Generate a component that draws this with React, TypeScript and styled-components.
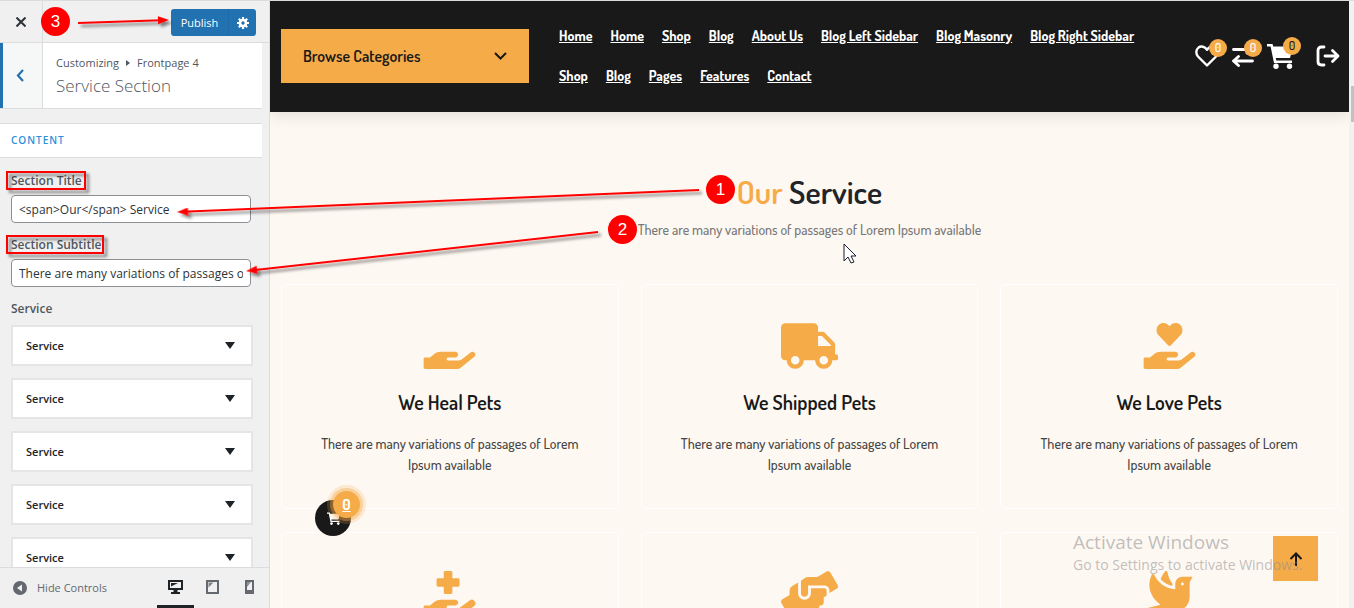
import React from "react";
import styled, { createGlobalStyle } from "styled-components";
import { FaHandHolding, FaTruck, FaHandHoldingHeart, FaHandHoldingMedical, FaHandsHelping, FaDove } from "react-icons/fa";

const UI = `"Segoe UI", "Open Sans", "Noto Sans", sans-serif`;
const SITE = `Dosis, "Liberation Sans Narrow", Lato, sans-serif`;
const ORANGE = "#f6ab49";
const BLUE = "#2271b1";

const GlobalStyle = createGlobalStyle`
  * { box-sizing: border-box; }
  body { margin: 0; overflow: hidden; }
  button { font: inherit; border: 0; padding: 0; margin: 0; background: none; color: inherit; cursor: pointer; }
  h1, h2, h3, p, ul { margin: 0; padding: 0; }
  svg { display: block; }
`;

const Screen = styled.div`
  position: relative;
  display: flex;
  height: 100vh;
  overflow: hidden;
  border-top: 1px solid #dcdcde;
`;

/* Customizer sidebar */

const Sidebar = styled.aside`
  display: flex;
  flex-direction: column;
  flex: 0 0 270px;
  border-right: 1px solid #dcdcde;
  background: #f0f0f0;
  color: #3c434a;
  font: 12px/20px ${UI};
`;

const TopBar = styled.header`
  display: flex;
  align-items: center;
  flex: 0 0 42px;
  padding-right: 13px;
  border-bottom: 1px solid #dcdcde;
`;

const CloseButton = styled.button`
  display: grid;
  place-items: center;
  width: 43px;
  height: 41px;
  border-right: 1px solid #dcdcde;
`;

const PublishGroup = styled.div`
  display: flex;
  height: 27px;
  margin-left: auto;
  margin-top: 2px;
  overflow: hidden;
  border-radius: 3px;
  background: ${BLUE};
  color: #fff;
`;

const PublishButton = styled.button`
  width: 58px;
  border-right: 1px solid #1f69a6;
  font-size: 11px;
`;

const GearButton = styled.button`
  display: grid;
  place-items: center;
  width: 27px;
`;

const Scroller = styled.div`
  flex: 1;
  min-height: 0;
  overflow: hidden;
  padding-right: 7px;
`;

const SectionHead = styled.div`
  display: flex;
  height: 66px;
  border-bottom: 1px solid #dcdcde;
  background: #fff;
`;

const BackButton = styled.button`
  display: grid;
  place-items: center;
  width: 43px;
  padding-right: 5px;
  border-left: 3px solid ${BLUE};
  border-right: 1px solid #dcdcde;
  background: #f6f7f7;
`;

const Crumbs = styled.div`
  display: flex;
  align-items: center;
  gap: 7px;
  font-size: 11px;
  color: #50575e;
`;

const HeadText = styled.div`
  padding: 10px 0 0 13px;
`;

const SectionName = styled.h1`
  font-size: 17px;
  line-height: 26px;
  font-weight: 300;
  color: #50575e;
`;

const GroupTitle = styled.h2`
  margin-top: 14px;
  padding-left: 11px;
  border: 1px solid #dcdcde;
  border-width: 1px 0;
  background: #fff;
  color: #2f8fd8;
  font-size: 10px;
  line-height: 33px;
  font-weight: 600;
  letter-spacing: 1px;
`;

const Fields = styled.div`
  padding: 13px 9px 0 11px;
`;

const FieldLabel = styled.label`
  display: block;
  margin-bottom: 4px;
  line-height: 20px;
  font-weight: 600;
  color: #50575e;
`;

const TextInput = styled.input`
  display: block;
  width: 240px;
  height: 28px;
  margin-bottom: 12px;
  padding: 0 7px;
  border: 1px solid #8c8f94;
  border-radius: 4px;
  background: #fff;
  color: #2c3338;
  font: 12px/26px ${UI};
`;

const RepeaterLabel = styled.p`
  margin-bottom: 6px;
  font-weight: 600;
  color: #50575e;
`;

const Repeater = styled.div`
  display: flex;
  flex-direction: column;
  gap: 12px;
`;

const RepeaterRow = styled.button`
  display: flex;
  align-items: center;
  justify-content: space-between;
  flex: 0 0 41px;
  padding: 0 16px 0 13px;
  border: 2px solid #e5e5e5;
  background: #fff;
  color: #1d2327;
  font-size: 11px;
  font-weight: 600;
`;

const Caret = styled.span`
  border: 5px solid transparent;
  border-top: 7px solid #1d2327;
  border-bottom: 0;
`;

const BottomBar = styled.footer`
  display: flex;
  align-items: stretch;
  flex: 0 0 41px;
  padding: 0 1px 0 12px;
  border-top: 1px solid #dcdcde;
  background: #f0f0f0;
`;

const HideButton = styled.button`
  display: flex;
  align-items: center;
  gap: 9px;
  color: #646970;
  font-size: 11px;
`;

const Devices = styled.div`
  display: flex;
  margin-left: auto;
`;

const Device = styled.button<{ $active?: boolean }>`
  display: grid;
  place-items: center;
  width: 37px;
  border-bottom: 3px solid ${(p) => (p.$active ? "#1d2327" : "transparent")};
  color: ${(p) => (p.$active ? "#1d2327" : "#646970")};
`;

/* Site preview */

const Preview = styled.main`
  flex: 1;
  min-width: 0;
  overflow: hidden;
  background: #fef8f2;
  font-family: ${SITE};
`;

const SiteHeader = styled.header`
  display: flex;
  align-items: center;
  height: 111px;
  padding: 0 9px 2px 11px;
  background: #191919;
  box-shadow: 0 4px 14px rgba(0, 0, 0, 0.1);
  color: #fff;
`;

const Browse = styled.button`
  display: flex;
  align-items: center;
  justify-content: space-between;
  flex: 0 0 248px;
  height: 54px;
  padding: 0 22px;
  background: ${ORANGE};
  color: #191919;
  font-size: 16px;
  font-weight: 600;
`;

const Nav = styled.nav`
  display: flex;
  flex-wrap: wrap;
  flex: 1;
  gap: 0 18px;
  max-width: 600px;
  margin-left: 30px;
`;

const NavLink = styled.a`
  color: #fff;
  font-size: 14px;
  line-height: 40px;
  font-weight: 700;
`;

const Tools = styled.div`
  display: flex;
  align-items: center;
  gap: 13px;
  margin-left: auto;
`;

const Tool = styled.button`
  position: relative;
`;

const CartTool = styled(Tool)`
  margin-right: 10px;
`;

const Count = styled.span`
  position: absolute;
  top: -6px;
  right: -8px;
  width: 18px;
  border-radius: 50%;
  background: ${ORANGE};
  font: 500 12px/18px ${SITE};
  text-align: center;
`;

const DarkCount = styled(Count)`
  color: #191919;
`;

const Intro = styled.section`
  padding: 60px 0 44px;
  text-align: center;
`;

const Title = styled.h2`
  color: #212529;
  font-size: 32px;
  line-height: 40px;
  font-weight: 600;
`;

const Accent = styled.span`
  color: ${ORANGE};
`;

const Subtitle = styled.p`
  margin-top: 7px;
  color: #777;
  font-size: 14px;
  line-height: 21px;
  font-weight: 500;
`;

const Cards = styled.section`
  display: grid;
  grid-template-columns: repeat(3, 1fr);
  gap: 23px 22px;
  padding: 0 11px;
`;

const Card = styled.article`
  min-height: 225px;
  padding: 38px 35px 0;
  border: 1px solid #fff;
  border-radius: 5px;
  text-align: center;
`;

const CardIcon = styled.div`
  display: flex;
  justify-content: center;
  color: ${ORANGE};

  svg {
    width: 57px;
    height: 46px;
  }
`;

const CardTitle = styled.h3`
  margin-top: 19px;
  color: #191919;
  font-size: 20px;
  line-height: 28px;
  font-weight: 600;
`;

const CardText = styled.p`
  margin-top: 17px;
  color: #444;
  font-size: 14px;
  line-height: 21px;
  font-weight: 500;
`;

const ScrollTrack = styled.div`
  flex: 0 0 5px;
  padding: 85px 0 0 2px;
  background: #f1f1f1;
`;

const ScrollThumb = styled.div`
  height: 36px;
  background: #c1c1c1;
`;

/* Floating pieces over the preview */

const FloatingCart = styled.button`
  position: absolute;
  left: 315px;
  bottom: 72px;
  display: grid;
  place-items: center;
  width: 36px;
  height: 36px;
  border-radius: 50%;
  background: #191919;
`;

const FloatingCount = styled.span`
  position: absolute;
  top: -9px;
  right: -9px;
  width: 27px;
  border-radius: 50%;
  background: ${ORANGE};
  box-shadow: 0 0 0 3px rgba(246, 171, 73, 0.4), 0 0 0 6px rgba(246, 171, 73, 0.2);
  color: #fff;
  font: 700 15px/27px ${SITE};
  text-align: center;
  text-decoration: underline;
`;

const ToTop = styled.button`
  position: absolute;
  right: 36px;
  bottom: 27px;
  display: grid;
  place-items: center;
  width: 45px;
  height: 45px;
  background: ${ORANGE};
`;

const Watermark = styled.div`
  position: absolute;
  right: 45px;
  bottom: 33px;
  width: 236px;
  color: rgba(140, 140, 140, 0.55);
  font: 14px/20px ${UI};
  white-space: nowrap;
  pointer-events: none;
`;

const WatermarkTitle = styled.div`
  font-size: 19px;
  line-height: 26px;
`;

/* Tutorial annotations */

const Overlay = styled.svg`
  position: absolute;
  top: -1px;
  left: 0;
  pointer-events: none;
`;

const Step = styled.span<{ $x: number; $y: number }>`
  position: absolute;
  left: ${(p) => p.$x}px;
  top: ${(p) => p.$y}px;
  width: 29px;
  border-radius: 50%;
  background: #f00;
  color: #fff;
  font: 17px/29px "Liberation Sans", Arial, sans-serif;
  text-align: center;
`;

const Arrow = ({ x1, y1, x2, y2 }: { x1: number; y1: number; x2: number; y2: number }) => {
  const angle = (Math.atan2(y2 - y1, x2 - x1) * 180) / Math.PI;
  const length = Math.hypot(x2 - x1, y2 - y1);
  return (
    <g transform={`translate(${x1} ${y1}) rotate(${angle})`}>
      <path d={`M0 0H${length - 8}`} stroke="#f00" strokeWidth="1.8" />
      <path d={`M${length} 0l-11-4v8z`} fill="#f00" />
    </g>
  );
};

const CartShape = ({ size }: { size: number }) => (
  <svg width={size} height={size} viewBox="0 0 26 26" fill="#fff">
    <path d="M0 1h5.500l.8 2.500H26l-3 11.500H8.800l.5 2.500H25V20H7L3.600 3.500H0z" />
    <circle cx="9" cy="23.200" r="2.700" />
    <circle cx="22.500" cy="23.200" r="2.700" />
  </svg>
);

const navItems = [
  "Home", "Home", "Shop", "Blog", "About Us", "Blog Left Sidebar", "Blog Masonry", "Blog Right Sidebar",
  "Shop", "Blog", "Pages", "Features", "Contact",
];

const blurb = "There are many variations of passages of Lorem Ipsum available";

const services = [
  { title: "We Heal Pets", text: blurb, Icon: FaHandHolding },
  { title: "We Shipped Pets", text: blurb, Icon: FaTruck },
  { title: "We Love Pets", text: blurb, Icon: FaHandHoldingHeart },
  { Icon: FaHandHoldingMedical },
  { Icon: FaHandsHelping },
  { Icon: FaDove },
];

export default function App() {
  return (
    <>
      <GlobalStyle />
      <Screen>
        <Sidebar>
          <TopBar>
            <CloseButton aria-label="Close">
              <svg width="10" height="10" viewBox="0 0 10 10" stroke="#2c3338" strokeWidth="2">
                <path d="M.5.5l9 9M9.500.5l-9 9" />
              </svg>
            </CloseButton>
            <PublishGroup>
              <PublishButton>Publish</PublishButton>
              <GearButton aria-label="Publish settings">
                <svg width="12" height="12" viewBox="0 0 12 12">
                  <circle cx="6" cy="6" r="3" fill="none" stroke="#fff" strokeWidth="2.600" />
                  <path d="M6 0v2.500M6 9.500V12M0 6h2.500M9.500 6H12M1.800 1.800l1.700 1.700M8.500 8.500l1.700 1.700M1.800 10.200l1.700-1.700M8.500 3.500l1.700-1.700" stroke="#fff" strokeWidth="2.200" />
                </svg>
              </GearButton>
            </PublishGroup>
          </TopBar>
          <Scroller>
            <SectionHead>
              <BackButton aria-label="Back">
                <svg width="8" height="13" viewBox="0 0 8 13" fill="none" stroke={BLUE} strokeWidth="2.200">
                  <path d="M7 1L2 6.500 7 12" />
                </svg>
              </BackButton>
              <HeadText>
                <Crumbs>
                  <span>Customizing</span>
                  <svg width="4" height="6" viewBox="0 0 4 6" fill="#50575e"><path d="M0 0l4 3-4 3z" /></svg>
                  <span>Frontpage 4</span>
                </Crumbs>
                <SectionName>Service Section</SectionName>
              </HeadText>
            </SectionHead>
            <GroupTitle>CONTENT</GroupTitle>
            <Fields>
              <FieldLabel htmlFor="section-title">Section Title</FieldLabel>
              <TextInput id="section-title" defaultValue="<span>Our</span> Service" />
              <FieldLabel htmlFor="section-subtitle">Section Subtitle</FieldLabel>
              <TextInput id="section-subtitle" defaultValue={blurb} />
              <RepeaterLabel>Service</RepeaterLabel>
              <Repeater>
                {[0, 1, 2, 3, 4].map((i) => (
                  <RepeaterRow key={i}>
                    Service
                    <Caret />
                  </RepeaterRow>
                ))}
              </Repeater>
            </Fields>
          </Scroller>
          <BottomBar>
            <HideButton>
              <svg width="16" height="16" viewBox="0 0 16 16">
                <circle cx="8" cy="8" r="7" fill="#646970" />
                <path d="M10 4.500v7L5 8z" fill="#f0f0f0" />
              </svg>
              Hide Controls
            </HideButton>
            <Devices>
              <Device $active aria-label="Desktop">
                <svg width="15" height="15" viewBox="0 0 15 15" fill="currentColor">
                  <path fillRule="evenodd" d="M0 1h15v10H9.500v2H12v2H3v-2h2.500v-2H0zM2 3v6h11V3z" />
                  <path d="M3 4h7L3 7.500z" />
                </svg>
              </Device>
              <Device aria-label="Tablet">
                <svg width="13" height="14" viewBox="0 0 13 14" fill="currentColor">
                  <path fillRule="evenodd" d="M0 0h13v14H0zM2 2v10h9V2z" />
                  <path d="M2.500 2.500h5l-5 5z" opacity="0.8" />
                </svg>
              </Device>
              <Device aria-label="Mobile">
                <svg width="9" height="14" viewBox="0 0 9 14" fill="currentColor">
                  <path fillRule="evenodd" d="M0 0h9v14H0zM2 2v8h5V2z" />
                  <path d="M2 2h4L2 7z" opacity="0.7" />
                </svg>
              </Device>
            </Devices>
          </BottomBar>
        </Sidebar>

        <Preview>
          <SiteHeader>
            <Browse>
              Browse Categories
              <svg width="13" height="8" viewBox="0 0 13 8" fill="none" stroke="#191919" strokeWidth="2">
                <path d="M1 1l5.500 5.500L12 1" />
              </svg>
            </Browse>
            <Nav>
              {navItems.map((item, i) => (
                <NavLink href="#" key={i}>{item}</NavLink>
              ))}
            </Nav>
            <Tools>
              <Tool aria-label="Wishlist">
                <svg width="24" height="22" viewBox="0 0 24 22" fill="none" stroke="#fff" strokeWidth="2.400" strokeLinejoin="round">
                  <path d="M12 20.500L3 11.500C.5 8.500 1 4.500 3.500 2.600 6.300.6 9.800 1.600 12 4.700c2.200-3.100 5.700-4.100 8.500-2.100C23 4.500 23.500 8.500 21 11.500z" />
                </svg>
                <Count>0</Count>
              </Tool>
              <Tool aria-label="Compare">
                <svg width="22" height="22" viewBox="0 0 22 22" fill="none" stroke="#fff" strokeWidth="2.800" strokeLinecap="round" strokeLinejoin="round">
                  <path d="M1.500 4.500H20M15 1l5 3.500L15 8M20.500 16h-19M6.500 11.500L1.500 16l5 4.500" />
                </svg>
                <Count>0</Count>
              </Tool>
              <CartTool aria-label="Cart">
                <CartShape size={26} />
                <DarkCount>0</DarkCount>
              </CartTool>
              <Tool aria-label="Log out">
                <svg width="24" height="22" viewBox="0 0 24 22" fill="none" stroke="#fff" strokeWidth="2.800" strokeLinecap="round" strokeLinejoin="round">
                  <path d="M8 2H5.500Q2 2 2 5.500v11Q2 20 5.500 20H8M9 11h13M16.500 5.500L22 11l-5.500 5.500" />
                </svg>
              </Tool>
            </Tools>
          </SiteHeader>
          <Intro>
            <Title><Accent>Our</Accent> Service</Title>
            <Subtitle>{blurb}</Subtitle>
          </Intro>
          <Cards>
            {services.map(({ title, text, Icon }, i) => (
              <Card key={i}>
                <CardIcon><Icon /></CardIcon>
                {title && <CardTitle>{title}</CardTitle>}
                {text && <CardText>{text}</CardText>}
              </Card>
            ))}
          </Cards>
        </Preview>
        <ScrollTrack><ScrollThumb /></ScrollTrack>

        <FloatingCart aria-label="Open cart">
          <CartShape size={13} />
          <FloatingCount>0</FloatingCount>
        </FloatingCart>
        <ToTop aria-label="Back to top">
          <svg width="14" height="14" viewBox="0 0 14 14" fill="none" stroke="#191919" strokeWidth="2">
            <path d="M7 14V1.500M1.500 7L7 1.500 12.500 7" />
          </svg>
        </ToTop>
        <Watermark>
          <WatermarkTitle>Activate Windows</WatermarkTitle>
          Go to Settings to activate Windows.
        </Watermark>

        <Overlay width="900" height="300" viewBox="0 0 900 300" aria-hidden="true">
          <defs>
            <filter id="soft" x="-50" y="-50" width="1000" height="400" filterUnits="userSpaceOnUse">
              <feDropShadow dx="3" dy="3" stdDeviation="1.500" floodColor="#000" floodOpacity="0.5" />
            </filter>
          </defs>
          <g filter="url(#soft)" fill="none">
            <Arrow x1={78} y1={23} x2={169} y2={20} />
            <Arrow x1={699} y1={190} x2={177} y2={212} />
            <Arrow x1={598} y1={232} x2={246} y2={271} />
            <path d="M7 172h78v17H7zM7 236h96v17H7z" stroke="#f00" strokeWidth="2" />
          </g>
          <path d="M844 244v17l4-4 3 6 3-1-3-6h5z" fill="#fff" stroke="#1c1c30" />
        </Overlay>
        <Step $x={41} $y={6}>3</Step>
        <Step $x={706} $y={174}>1</Step>
        <Step $x={608} $y={214}>2</Step>
      </Screen>
    </>
  );
}
